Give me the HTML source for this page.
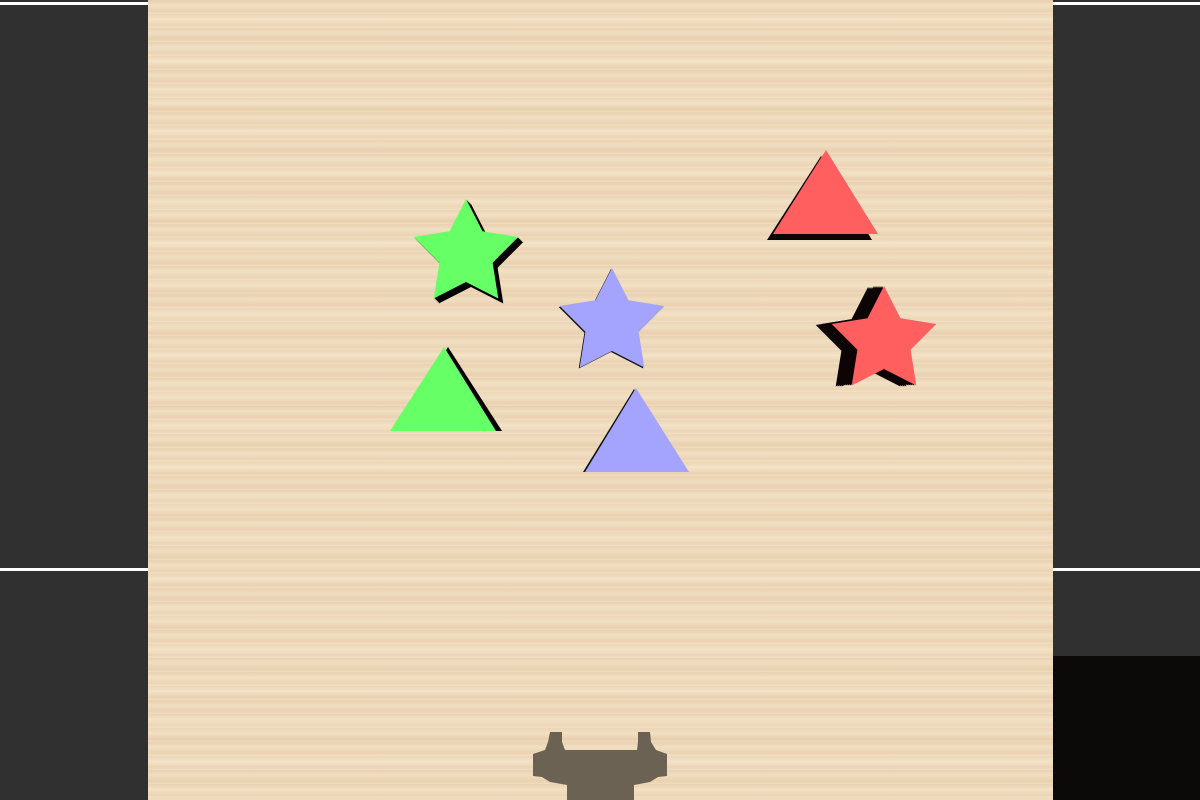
<!DOCTYPE html>
<html><head><style>
html,body{margin:0;padding:0;width:1200px;height:800px;overflow:hidden;background:#303030}
.wood{position:absolute;left:148px;top:0;width:905px;height:800px;
background:
repeating-linear-gradient(180deg,rgba(200,150,110,0.10) 0px,rgba(200,150,110,0) 3px,rgba(255,248,232,0.22) 5px,rgba(200,150,110,0) 8px,rgba(185,135,95,0.09) 11px,rgba(255,250,238,0.12) 14px),
repeating-linear-gradient(180deg,rgba(190,140,100,0.06) 0px,rgba(255,245,228,0.10) 23px,rgba(190,140,100,0.07) 37px),
#efdbbc}
.line{position:absolute;height:3px;background:#fff}
</style></head><body>
<div class="line" style="left:0;top:2px;width:148px"></div>
<div class="line" style="left:1053px;top:2px;width:147px"></div>
<div class="line" style="left:0;top:568px;width:148px"></div>
<div class="line" style="left:1053px;top:568px;width:147px"></div>
<div style="position:absolute;left:1053px;top:656px;width:147px;height:144px;background:#0b0a09"></div>
<div class="wood"></div>
<svg width="1200" height="800" style="position:absolute;left:0;top:0">
<defs>
<polygon id="star" points="0,-55 16.5,-22.7 52.3,-17 26.6,8.7 32.3,44.5 0,28 -32.3,44.5 -26.6,8.7 -52.3,-17 -16.5,-22.7"/>
</defs>
<!-- green star -->
<g fill="#000"><use href="#star" transform="translate(467,255)"/><use href="#star" transform="translate(468,256)"/><use href="#star" transform="translate(469,257)"/><use href="#star" transform="translate(470,258)"/><use href="#star" transform="translate(471,259)"/></g>
<use href="#star" fill="#66ff66" transform="translate(466,254)"/>
<!-- blue star -->
<use href="#star" fill="#111" transform="translate(611,324)"/>
<use href="#star" fill="#a4a4ff" transform="translate(612,323)"/>
<!-- red star -->
<g fill="#0d0505"><use href="#star" transform="translate(882,341)"/><use href="#star" transform="translate(880,341)"/><use href="#star" transform="translate(878,341)"/><use href="#star" transform="translate(876,341)"/><use href="#star" transform="translate(874,342)"/><use href="#star" transform="translate(872,342)"/><use href="#star" transform="translate(870,342)"/><use href="#star" transform="translate(868,342)"/><use href="#star" transform="translate(874,341)"/></g>
<use href="#star" fill="#ff5f5f" transform="translate(884,341)"/>
<!-- green triangle -->
<polygon points="448,347 502,431 396,431" fill="#000"/>
<polygon points="444,347 496,431 390,431" fill="#66ff66"/>
<!-- blue triangle -->
<polygon points="634,389 687,472 583,472" fill="#111"/>
<polygon points="636,388 689,472 585,472" fill="#a4a4ff"/>
<!-- red triangle -->
<polygon points="821,156 872,240 767,240" fill="#0d0505"/>
<polygon points="826,150 878,234 773,234" fill="#ff5f5f"/>
<!-- robot shadow -->
<polygon points="550,732 562,732 562,742 565,750 637,750 638,742 638,732 650,732 651,742 656,750 667,754 667,776 658,777 650,782 634,785 634,800 567,800 567,785 550,782 542,777 533,776 533,754 545,750 548,742" fill="#6c6253"/>
</svg>
</body></html>
